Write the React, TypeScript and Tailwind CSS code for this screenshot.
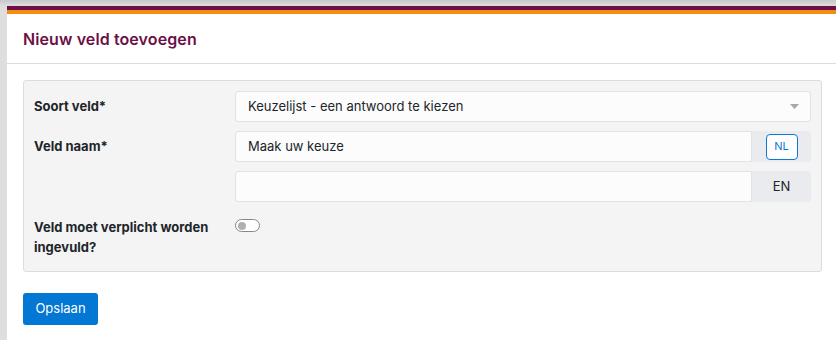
export default function App() {
  return (
    <div
      className="h-[340px] w-[836px] overflow-hidden bg-[linear-gradient(to_bottom,#c8c8c8,#dedede_6px,#dedede)] pl-[7px] pt-[6px]"
      style={{ fontFamily: 'Inter, "Noto Sans", sans-serif' }}
    >
      <div className="h-full bg-white">
        <div className="h-[4px] bg-[#6b1046]" />
        <div className="h-[4px] bg-[#f68b14]" />
        <div className="flex h-[50px] items-center border-b border-[#dcdcdc] px-4">
          <h1 className="text-[16px] font-semibold tracking-[0.1px] text-[#6b1046]">Nieuw veld toevoegen</h1>
        </div>
        <div className="px-4 pt-4">
          <div className="w-[799px] rounded-[3px] border border-[#dcdcdc] bg-[#f4f4f4] px-[10px] pt-[10px] pb-[14px]">
            <div className="flex">
              <label className="w-[201px] pt-[6px] text-[13px] font-bold text-[#212529]">Soort veld*</label>
              <div className="relative flex h-[31px] w-[576px] items-center rounded-[3px] border border-[#e2e2e2] bg-[#fcfcfc] px-3 text-[13px] text-[#212529]">
                Keuzelijst - een antwoord te kiezen
                <svg className="absolute right-[11px] top-[12px]" width="9" height="5" viewBox="0 0 9 5">
                  <path d="M0 0h9L4.5 5z" fill="#a8a8a8" />
                </svg>
              </div>
            </div>
            <div className="mt-[9px] flex">
              <label className="w-[201px] pt-[6px] text-[13px] font-bold text-[#212529]">Veld naam*</label>
              <div className="flex w-[576px] flex-col gap-[9px]">
                <div className="flex h-[31px]">
                  <div className="flex flex-1 items-center rounded-l-[3px] border border-[#e2e2e2] bg-[#fcfcfc] px-3 text-[13px] text-[#212529]">
                    Maak uw keuze
                  </div>
                  <div className="flex w-[59px] items-center justify-center rounded-r-[3px] bg-[#e9ebee]">
                    <span className="flex h-[26px] w-[32px] items-center justify-center rounded-[4px] border border-[#0b7ad4] bg-white text-[11px] text-[#0b7ad4]">
                      NL
                    </span>
                  </div>
                </div>
                <div className="flex h-[31px]">
                  <div className="flex-1 rounded-l-[3px] border border-[#e2e2e2] bg-[#fcfcfc]" />
                  <div className="flex w-[59px] items-center justify-center rounded-r-[3px] bg-[#e9ebee] text-[13px] text-[#212529]">
                    EN
                  </div>
                </div>
              </div>
            </div>
            <div className="mt-[15px] flex">
              <label className="w-[201px] text-[13px] font-bold leading-[20px] text-[#212529]">
                Veld moet verplicht worden ingevuld?
              </label>
              <div className="pt-[2px]">
                <div className="flex h-[13px] w-[25px] items-center rounded-full border border-[#888] bg-white pl-[2px]">
                  <div className="h-[8px] w-[8px] rounded-full bg-[#b0b0b0]" />
                </div>
              </div>
            </div>
          </div>
          <button className="mt-[21px] h-[32px] w-[75px] rounded-[3px] bg-[#0277d4] text-[13px] text-white">
            Opslaan
          </button>
        </div>
      </div>
    </div>
  );
}
